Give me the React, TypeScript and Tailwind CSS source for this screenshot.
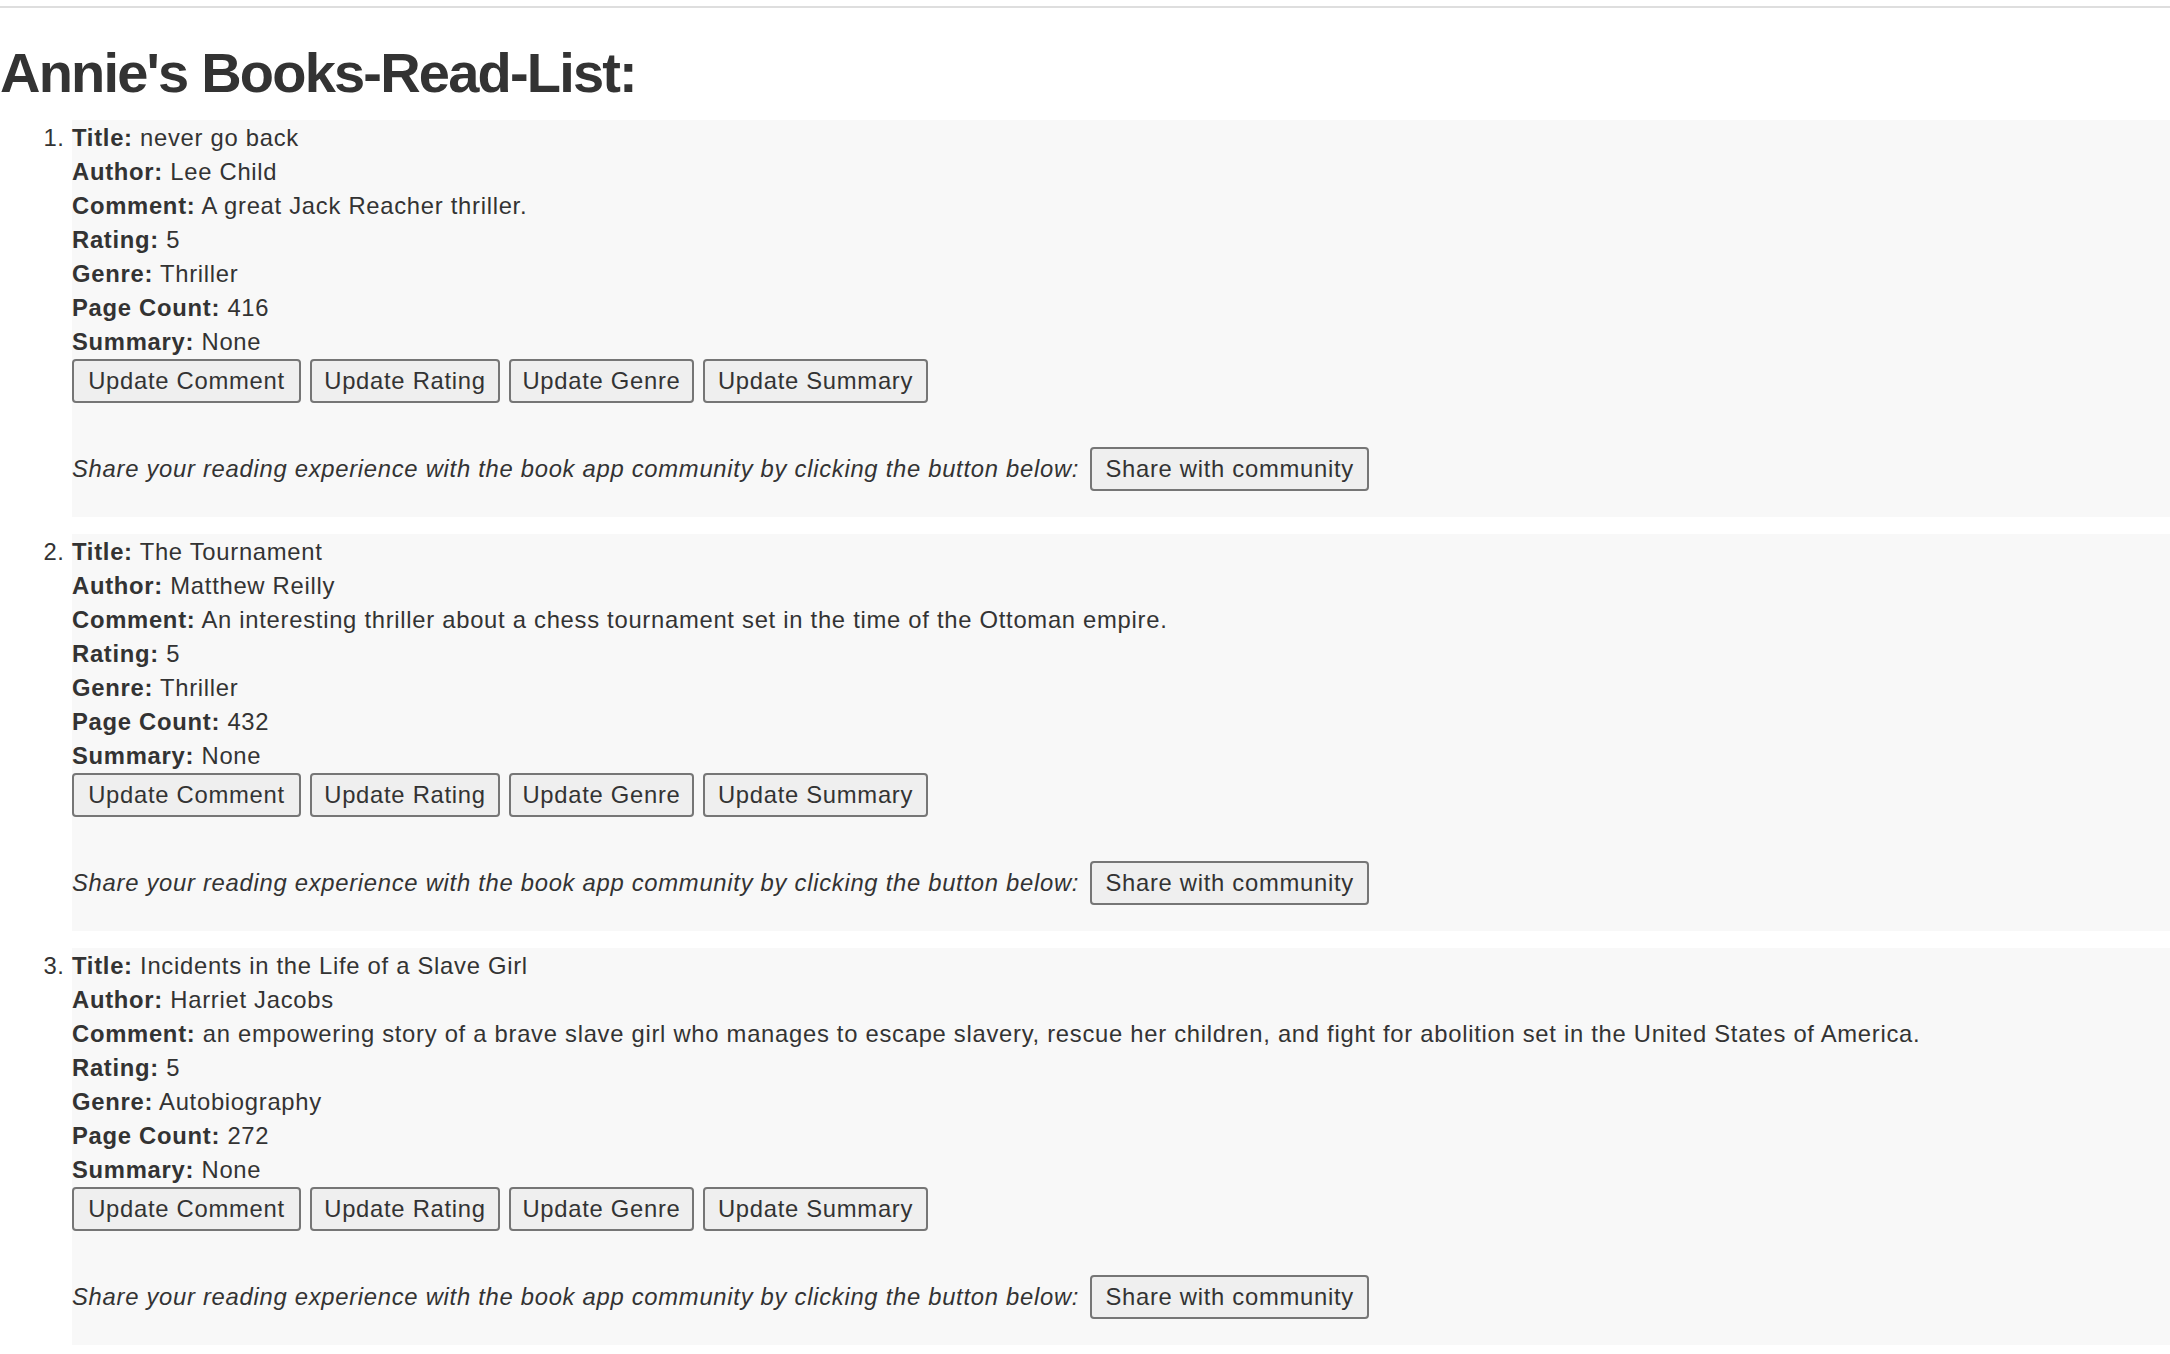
import React from "react";

type Book = {
  title: string;
  author: string;
  comment: string;
  rating: string;
  genre: string;
  pages: string;
  summary: string;
};

const books: Book[] = [
  {
    title: "never go back",
    author: "Lee Child",
    comment: "A great Jack Reacher thriller.",
    rating: "5",
    genre: "Thriller",
    pages: "416",
    summary: "None",
  },
  {
    title: "The Tournament",
    author: "Matthew Reilly",
    comment:
      "An interesting thriller about a chess tournament set in the time of the Ottoman empire.",
    rating: "5",
    genre: "Thriller",
    pages: "432",
    summary: "None",
  },
  {
    title: "Incidents in the Life of a Slave Girl",
    author: "Harriet Jacobs",
    comment:
      "an empowering story of a brave slave girl who manages to escape slavery, rescue her children, and fight for abolition set in the United States of America.",
    rating: "5",
    genre: "Autobiography",
    pages: "272",
    summary: "None",
  },
];

function Line({ label, value }: { label: string; value: string }) {
  return (
    <div className="h-[34px] leading-[34px] whitespace-nowrap">
      <b className="font-bold">{label}</b> {value}
    </div>
  );
}

function Btn({ children, w }: { children: React.ReactNode; w: string }) {
  return (
    <button
      type="button"
      className={`${w} h-[44px] shrink-0 rounded-[4px] border-2 border-[#767676] bg-[#efefef] text-[#333] text-center leading-[34px] whitespace-nowrap`}
    >
      {children}
    </button>
  );
}

export default function App() {
  return (
    <div
      className="min-h-screen bg-white text-[#333] text-[23.8px] tracking-[0.72px]"
      style={{ fontFamily: '"Liberation Sans", Arial, Helvetica, sans-serif' }}
    >
      <div className="pt-[6px]">
        <div className="h-[2px] bg-[#dedede]" />
      </div>
      <h1 className="mt-[34px] mb-[16px] h-[62px] leading-[62px] text-[56px] font-bold tracking-[-1.8px] whitespace-nowrap">
        Annie's Books-Read-List:
      </h1>
      <ol className="list-decimal pl-[72px] m-0">
        {books.map((b, i) => (
          <li key={i} className="bg-[#f8f8f8] mb-[17px] pb-[26px]">
            <Line label="Title:" value={b.title} />
            <Line label="Author:" value={b.author} />
            <Line label="Comment:" value={b.comment} />
            <Line label="Rating:" value={b.rating} />
            <Line label="Genre:" value={b.genre} />
            <Line label="Page Count:" value={b.pages} />
            <Line label="Summary:" value={b.summary} />
            <div className="flex gap-[9px] h-[44px]">
              <Btn w="w-[229px]">Update Comment</Btn>
              <Btn w="w-[190px]">Update Rating</Btn>
              <Btn w="w-[185px]">Update Genre</Btn>
              <Btn w="w-[225px]">Update Summary</Btn>
            </div>
            <div className="mt-[44px] h-[44px] flex items-center gap-[11px] whitespace-nowrap">
              <i className="italic">
                Share your reading experience with the book app community by clicking the button below:
              </i>
              <Btn w="w-[279px]">Share with community</Btn>
            </div>
          </li>
        ))}
      </ol>
    </div>
  );
}
